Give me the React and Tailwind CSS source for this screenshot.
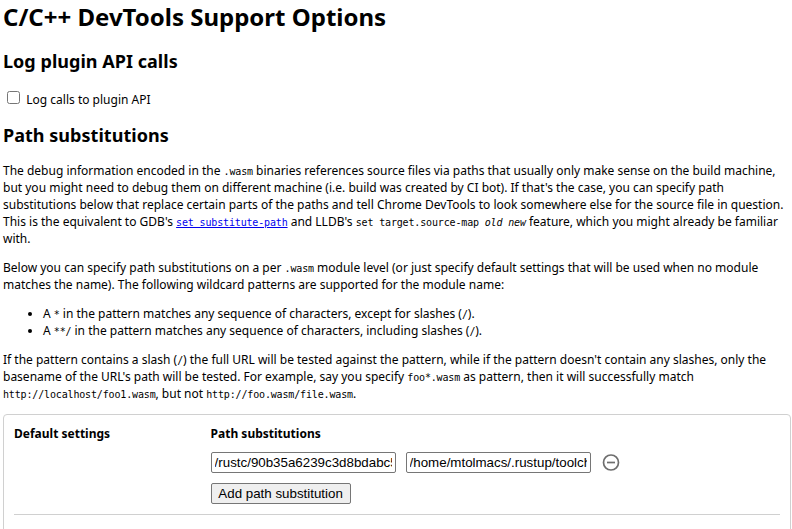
import React from 'react';

function Code({ children }) {
  return (
    <code className="font-['DejaVu_Sans_Mono',monospace] text-[10px] leading-none tracking-[-0.155px]">
      {children}
    </code>
  );
}

function PathInput({ value, label }) {
  return (
    <input
      type="text"
      aria-label={label}
      defaultValue={value}
      className="h-[21px] w-[185px] rounded-[2px] border border-[#767676] bg-white px-[3px] py-0 font-['Liberation_Sans',Arial,sans-serif] text-[13.333px] leading-[15px] text-black outline-none"
    />
  );
}

export default function App() {
  return (
    <main className="h-[529px] overflow-hidden bg-white pl-[3px] pr-[2px] font-['Noto_Sans',sans-serif] text-[12px] leading-[17px] text-black">
      <h1 className="text-[24px] font-bold leading-[33px]">C/C++ DevTools Support Options</h1>
      <h2 className="mt-[16px] text-[18px] font-bold leading-[25px] tracking-[0.03px]">Log plugin API calls</h2>
      <label className="mt-[16px] flex h-[17px] items-start">
        <input
          type="checkbox"
          className="ml-[4px] mt-px size-[13px] shrink-0 appearance-none rounded-[2.5px] border border-[#767676] bg-white"
        />
        <span className="ml-[6.3px] mt-px">Log calls to plugin API</span>
      </label>
      <h2 className="mt-[16px] text-[18px] font-bold leading-[25px] tracking-[0.03px]">Path substitutions</h2>
      <p className="mt-[14px]">
        The debug information encoded in the <Code>.wasm</Code> binaries references source files via paths that usually
        only make sense on the build machine, but you might need to debug them on different machine (i.e. build was
        created by CI bot). If that's the case, you can specify path substitutions below that replace certain parts of
        the paths and tell Chrome DevTools to look somewhere else for the source file in question. This is the
        equivalent to GDB's{' '}
        <a href="#substitute-path" className="text-[#0000ee] underline">
          <Code>set substitute-path</Code>
        </a>{' '}
        and LLDB's{' '}
        <Code>
          set target.source-map <i>old</i> <i>new</i>
        </Code>{' '}
        feature, which you might already be familiar with.
      </p>
      <p className="mt-3">
        Below you can specify path substitutions on a per <Code>.wasm</Code> module level (or just specify default
        settings that will be used when no module matches the name). The following wildcard patterns are supported for
        the module name:
      </p>
      <ul className="mt-3 list-disc pl-[40px]">
        <li>
          A <Code>*</Code> in the pattern matches any sequence of characters, except for slashes (<Code>/</Code>).
        </li>
        <li>
          A <Code>**/</Code> in the pattern matches any sequence of characters, including slashes (<Code>/</Code>).
        </li>
      </ul>
      <p className="mt-3">
        If the pattern contains a slash (<Code>/</Code>) the full URL will be tested against the pattern, while if the
        pattern doesn't contain any slashes, only the basename of the URL's path will be tested. For example, say you
        specify <Code>foo*.wasm</Code> as pattern, then it will successfully match{' '}
        <Code>http://localhost/foo1.wasm</Code>, but not <Code>http://foo.wasm/file.wasm</Code>.
      </p>
      <section className="mr-[-1px] mt-3 h-[140px] rounded-[4px] border border-[#d0d0d0] px-[10px] pt-[10px]">
        <div className="flex h-[90px] border-b border-[#d0d0d0]">
          <div className="w-[196.6px] shrink-0 font-bold">Default settings</div>
          <div>
            <div className="font-bold">Path substitutions</div>
            <div className="mt-[10px] flex items-center gap-[10px]">
              <PathInput label="From" value="/rustc/90b35a6239c3d8bdabc530a6a0816f7ff89a0aaf" />
              <PathInput label="To" value="/home/mtolmacs/.rustup/toolchains/stable" />
              <button aria-label="Remove" className="flex size-5 items-center justify-center">
                <svg width="20" height="20" viewBox="0 0 20 20" fill="none" stroke="#6e6e6e" strokeWidth="1.7">
                  <circle cx="10" cy="9.5" r="7.5" />
                  <path d="M6 9.5h8" />
                </svg>
              </button>
            </div>
            <button className="mt-[10px] block h-[21px] w-[140px] rounded-[2px] border border-[#767676] bg-[#efefef] text-center font-['Liberation_Sans',Arial,sans-serif] text-[13.333px] leading-[19px] text-black">
              Add path substitution
            </button>
          </div>
        </div>
      </section>
    </main>
  );
}
